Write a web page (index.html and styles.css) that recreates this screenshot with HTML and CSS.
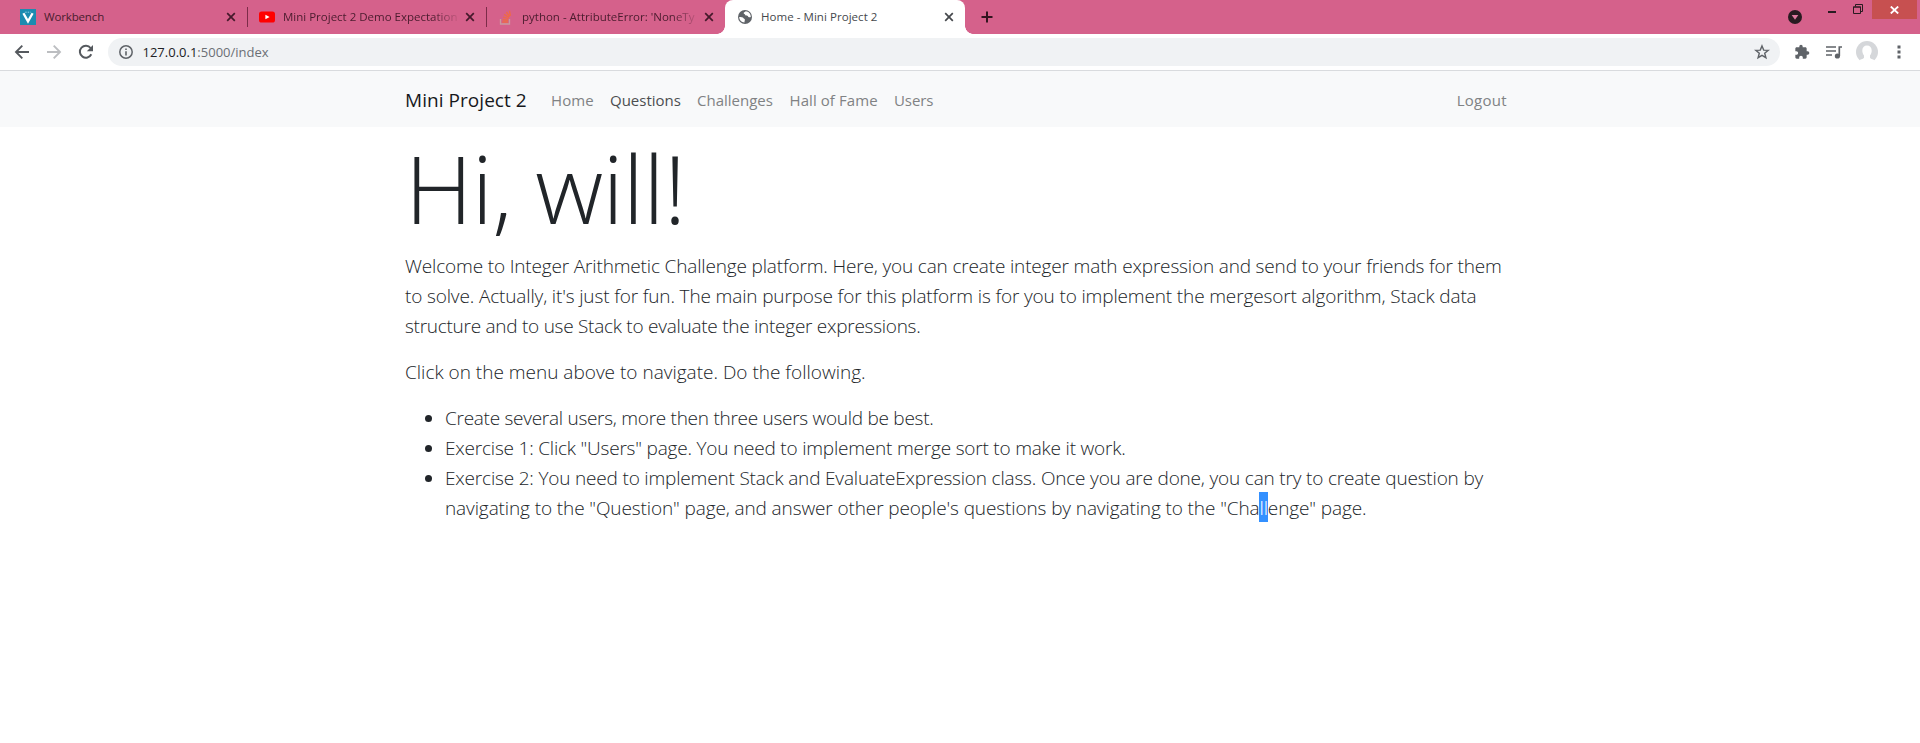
FILE: index.html
```html
<!DOCTYPE html>
<html lang="en">
<head>
<meta charset="utf-8">
<title>Home - Mini Project 2</title>
<link rel="stylesheet" href="styles.css">
</head>
<body>
<header class="tabstrip">
  <div class="tab">
    <svg class="fav" width="16" height="16" viewBox="0 0 16 16"><rect width="16" height="16" fill="#1c8bb0"/><path d="M3.4 4.2 8 12.4l4.6-8.2" fill="none" stroke="#fff" stroke-width="2.3"/><path d="M5.2 3.2h5.6" stroke="#8fd0e4" stroke-width="1" stroke-dasharray="1.5 1"/></svg>
    <span class="title t-work">Workbench</span>
    <svg class="x" width="10" height="10" viewBox="0 0 10 10"><path d="m1.2 1.2 7.6 7.6m0-7.6L1.2 8.8"/></svg>
  </div>
  <div class="tab sep">
    <svg class="fav" width="16" height="16" viewBox="0 0 16 16"><rect y="2.5" width="16" height="11" rx="2.6" fill="#f00"/><path d="m6.4 5.7 4.2 2.3-4.2 2.3z" fill="#fff"/></svg>
    <span class="title fade">Mini Project 2 Demo Expectation</span>
    <svg class="x" width="10" height="10" viewBox="0 0 10 10"><path d="m1.2 1.2 7.6 7.6m0-7.6L1.2 8.8"/></svg>
  </div>
  <div class="tab sep">
    <svg class="fav" width="16" height="16" viewBox="0 0 16 16"><path d="M2.5 10v5h9v-5" fill="none" stroke="#c99a9f" stroke-width="1.3"/><path d="M4.3 13h5.6M4.5 10.7l5.6.6M5 8.2l5.4 1.5M6.2 5.4l4.8 2.9M8.4 3l3.3 4.5M11.4 1.6l1 5.2" stroke="#ee6a45" stroke-width="1.4"/></svg>
    <span class="title fade">python - AttributeError: 'NoneTy</span>
    <svg class="x" width="10" height="10" viewBox="0 0 10 10"><path d="m1.2 1.2 7.6 7.6m0-7.6L1.2 8.8"/></svg>
  </div>
  <div class="tab active">
    <svg class="fav" width="16" height="16" viewBox="0 0 16 16"><circle cx="8" cy="8" r="7" fill="#5f6368"/><path d="M2.2 8.1c1.7.1 3.9 0 4.2 1 .2.9 1.300.7 1.500 1.600.1.800-.500 1.200-.400 2.900C4.600 13.500 2.300 11.200 2.200 8.100zM8.800 2.300c-.700.800-2.300.900-2.100 2 .100.800 1.300.500 1.400 1.500.100.900 1.300.800 2.200.900 1 .200.600 1.500 1.700 1.600.800.100 1.300-.200 1.800-.300 0-3.200-2.200-5.400-5-5.700z" fill="#fff"/></svg>
    <span class="title">Home - Mini Project 2</span>
    <svg class="x" width="10" height="10" viewBox="0 0 10 10"><path d="m1.2 1.2 7.6 7.6m0-7.6L1.2 8.8"/></svg>
  </div>
  <svg class="plus" width="12" height="12" viewBox="0 0 12 12"><path d="M6 .5v11M.5 6h11" stroke="#33141f" stroke-width="2"/></svg>
  <div class="window">
    <svg class="search" width="14" height="14" viewBox="0 0 14 14"><circle cx="7" cy="7" r="7" fill="#291b21"/><path d="M3.700 5h6.600L7 9.800z" fill="#dd7ba0"/></svg>
    <svg class="min" width="8" height="2" viewBox="0 0 8 2"><path d="M0 1h8" stroke="#291b21" stroke-width="2"/></svg>
    <svg class="restore" width="10" height="10" viewBox="0 0 10 10"><path d="M.5 3h7v6.500h-7zM0 3h8M2.500 2.500V.500h7v7H8" fill="none" stroke="#291b21"/></svg>
    <div class="close"><svg width="9" height="8" viewBox="0 0 9 8"><path d="m.8.5 7.400 7m0-7L.8 7.500" stroke="#fff" stroke-width="1.800"/></svg></div>
  </div>
</header>
<div class="toolbar">
  <svg width="16" height="16" viewBox="0 0 16 16"><path d="M15 8H2.400M8.300 1.700 2 8l6.300 6.300" fill="none" stroke="#55595e" stroke-width="1.900"/></svg>
  <svg width="16" height="16" viewBox="0 0 16 16"><path d="M1 8h12.600M7.700 1.700 14 8l-6.300 6.300" fill="none" stroke="#bcbec1" stroke-width="1.900"/></svg>
  <svg width="16" height="16" viewBox="0 0 16 16"><path d="M13.300 10.300A6 6 0 1 1 12.600 4" fill="none" stroke="#55595e" stroke-width="2"/><path d="M15 1v6.200H8.800z" fill="#55595e"/></svg>
  <div class="omnibox">
    <svg width="14" height="14" viewBox="0 0 14 14"><circle cx="7" cy="7" r="6.200" fill="none" stroke="#5f6368" stroke-width="1.500"/><path d="M7 6.200v4.300M7 3.500v1.500" stroke="#5f6368" stroke-width="1.600"/></svg>
    <span class="url"><b>127.0.0.1</b>:5000/index</span>
    <svg class="star" width="16" height="16" viewBox="0 0 16 16"><path d="m8 1.900 1.700 4.200 4.500.3-3.500 2.900 1.200 4.400L8 11.300l-3.900 2.400 1.200-4.400-3.500-2.900 4.500-.3z" fill="none" stroke="#5f6368" stroke-width="1.400"/></svg>
  </div>
  <div class="actions">
    <svg width="16" height="16" viewBox="0 0 24 24"><path d="M20.500 11H19V7c0-1.100-.9-2-2-2h-4V3.500a2.500 2.500 0 0 0-5 0V5H4c-1.100 0-2 .9-2 2v3.800h1.500c1.500 0 2.700 1.200 2.700 2.700S5 16.200 3.500 16.200H2V20c0 1.100.9 2 2 2h3.800v-1.500c0-1.500 1.200-2.700 2.700-2.700s2.700 1.200 2.700 2.700V22H17c1.100 0 2-.9 2-2v-4h1.500a2.500 2.500 0 0 0 0-5z" fill="#5f6368"/></svg>
    <svg width="16" height="14" viewBox="0 0 16 14"><path d="M0 2h10M0 6h10M0 10h6M13.300 11V2H16" fill="none" stroke="#5f6368" stroke-width="1.700"/><circle cx="11.400" cy="11" r="2.600" fill="#5f6368"/></svg>
    <svg width="22" height="22" viewBox="0 0 22 22"><circle cx="11" cy="11" r="11" fill="#d5d7da"/><path d="M11 4.500c3 0 4.700 2.100 4.700 5 0 2-.7 3.700-1.700 4.900v2c0 1.400 3 1.600 4.700 2.900L16 22H6l-2.700-2.700C5 18 8 17.800 8 16.400v-2c-1-1.200-1.700-2.900-1.700-4.900 0-2.900 1.700-5 4.700-5z" fill="#fff"/></svg>
    <svg width="4" height="14" viewBox="0 0 4 14"><path d="M.5.500h3v3h-3zM.500 5.500h3v3h-3zM.500 10.500h3v3h-3z" fill="#5f6368"/></svg>
  </div>
</div>
<nav class="navbar">
  <div class="container bar">
    <a class="brand">Mini Project 2</a>
    <a class="link home">Home</a>
    <a class="link questions">Questions</a>
    <a class="link challenges">Challenges</a>
    <a class="link hall">Hall of Fame</a>
    <a class="link users">Users</a>
    <a class="link logout">Logout</a>
  </div>
</nav>
<main class="container">
  <h1>Hi, will!</h1>
  <p><span class="line w1">Welcome to Integer Arithmetic Challenge platform. Here, you can create integer math expression and send to your friends for them</span>
  <span class="line w2">to solve. Actually, it's just for fun. The main purpose for this platform is for you to implement the mergesort algorithm, Stack data</span>
  <span class="line w3">structure and to use Stack to evaluate the integer expressions.</span></p>
  <p><span class="line">Click on the menu above to navigate. Do the following.</span></p>
  <ul>
    <li><span class="line w4">Create several users, more then three users would be best.</span></li>
    <li><span class="line w5">Exercise 1: Click "Users" page. You need to implement merge sort to make it work.</span></li>
    <li><span class="line w6">Exercise 2: You need to implement Stack and EvaluateExpression class. Once you are done, you can try to create question by</span>
    <span class="line w7">navigating to the "Question" page, and answer other people's questions by navigating to the "Cha<mark>ll</mark>enge" page.</span></li>
  </ul>
</main>
</body>
</html>
```
FILE: styles.css
```css
* { box-sizing: border-box; }
body { margin: 0; background: #fff; color: #212529; font-family: "Open Sans", "Noto Sans", sans-serif; overflow: hidden; }
svg { display: block; flex: none; }

.tabstrip { display: flex; align-items: center; height: 34px; padding-left: 8px; background: #d5618b; }
.tab { position: relative; display: flex; align-items: center; width: 239px; height: 34px; padding: 0 11px 0 12px; }
.tab.sep::before { content: ""; position: absolute; left: 0; top: 7px; width: 1px; height: 20px; background: #7c2c49; }
.tab.active { width: 240px; background: #fff; border-radius: 8px 8px 0 0; }
.tab.active::before, .tab.active::after { content: ""; position: absolute; bottom: 0; width: 8px; height: 8px; }
.tab.active::before { left: -8px; background: radial-gradient(circle at 0 0, transparent 7.5px, #fff 8px); }
.tab.active::after { right: -8px; background: radial-gradient(circle at 100% 0, transparent 7.5px, #fff 8px); }
.title { flex: 1; margin: 0 8px; white-space: nowrap; font-size: 11.5px; line-height: 16px; color: #4a1c2e; }
.t-work { letter-spacing: -.15px; }
.fade { -webkit-mask-image: linear-gradient(90deg, #000 150px, transparent 178px); mask-image: linear-gradient(90deg, #000 150px, transparent 178px); }
.active .title { color: #45484c; letter-spacing: .05px; }
.x { fill: none; stroke: #45192b; stroke-width: 1.7; }
.active .x { stroke: #45484c; }
.plus { margin-left: 16px; }
.window { display: flex; align-self: flex-start; height: 34px; margin-left: auto; padding-right: 3px; }
.search { margin: 10px 26px 0 0; }
.min { margin: 11px 17px 0 0; }
.restore { margin: 4px 9px 0 0; }
.close { display: flex; align-items: center; justify-content: center; width: 45px; height: 19px; background: #c75050; }

.toolbar { display: flex; align-items: center; gap: 16px; height: 37px; padding-left: 14px; border-bottom: 1px solid #d9dbde; }
.omnibox { display: flex; align-items: center; flex: 1; height: 28px; margin-left: -2px; padding: 0 10px 0 11px; border-radius: 14px; background: #f0f2f4; }
.url { margin-left: 9.5px; font-size: 13px; line-height: 18px; color: #6b6f74; }
.url b { font-weight: 400; color: #202124; }
.star { margin-left: auto; }
.actions { display: flex; align-items: center; gap: 16px; padding: 0 19px 0 0; margin-left: -2px; }
.actions svg:nth-child(3) { margin-left: -2px; }
.actions svg:nth-child(4) { margin-left: 3px; }

.container { width: 1140px; margin: 0 auto; padding: 0 15px; }
.navbar { height: 56px; background: #f8f9fa; }
.bar { display: flex; align-items: center; height: 56px; padding-top: 1px; white-space: nowrap; }
.brand { width: 122px; margin-right: 16px; font-size: 19px; line-height: 30px; color: #16181b; letter-spacing: .05px; }
.link { flex: none; padding: 0 8px; font-size: 15px; line-height: 24px; color: #808284; }
.home { width: 59px; letter-spacing: .1px; }
.questions { width: 87px; color: #4c4e50; }
.challenges { width: 92.5px; }
.hall { width: 104.5px; letter-spacing: .08px; }
.users { width: 56px; letter-spacing: -.1px; }
.logout { margin-left: auto; letter-spacing: .3px; }

h1 { margin: 0 0 5px; padding-top: 4px; font-size: 94px; font-weight: 300; line-height: 115.2px; letter-spacing: -.8px; }
p { margin: 0 0 16px; }
p, ul { font-size: 19px; font-weight: 300; line-height: 30px; }
ul { margin: 0; padding-left: 40px; }
.line { display: block; white-space: nowrap; }
.w1 { letter-spacing: -.16px; }
.w2 { letter-spacing: -.145px; }
.w3 { letter-spacing: -.265px; }
.w4 { letter-spacing: -.275px; }
.w5 { letter-spacing: -.2px; }
.w6 { letter-spacing: -.182px; }
.w7 { letter-spacing: -.11px; }
mark { padding: 3px 0 1px; background: #3390ff; color: #fff; }
```
